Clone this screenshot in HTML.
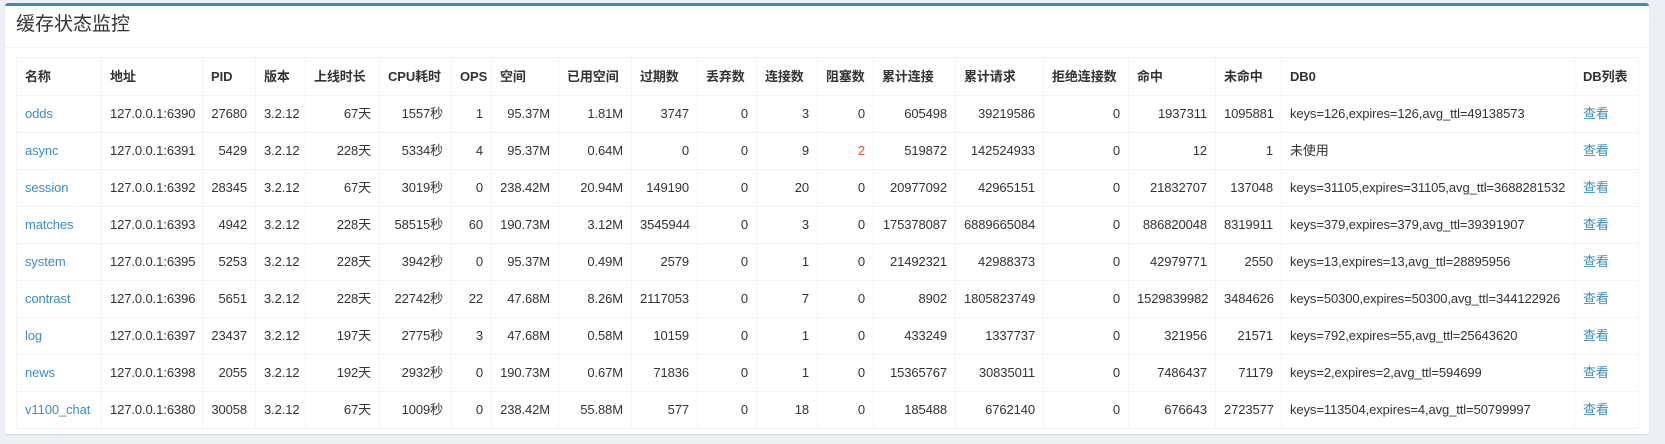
<!DOCTYPE html>
<html><head><meta charset="utf-8"><style>
body{margin:0;background:#ecf0f5;width:1665px;height:444px;overflow:hidden;font-family:"Liberation Sans","Noto Sans CJK SC",sans-serif;font-size:13px;color:#333}
.box{position:absolute;left:5px;top:3px;width:1644px;height:428px;background:#fff;border-top:3px solid #3c8dbc;border-radius:3px;box-shadow:0 1px 1px rgba(0,0,0,.1)}
.hd{height:41px;border-bottom:1px solid #f4f4f4;padding:0 11px;font-size:19px;line-height:38px}
table{position:absolute;left:11px;top:51px;border-collapse:collapse;table-layout:fixed;width:1622px}
td,th{border:1px solid #f4f4f4;padding:0 8px;height:36px;line-height:18px;vertical-align:middle;white-space:nowrap;overflow:hidden;text-align:right;letter-spacing:-0.1px}
th{text-align:left;font-weight:bold;height:37px}
td.l{text-align:left}
a{color:#3c8dbc;text-decoration:none}
.r{color:#dd4b39}
</style></head><body>
<div class="box"><div class="hd">缓存状态监控</div>
<table>
<colgroup><col style="width:85px"><col style="width:101px"><col style="width:53px"><col style="width:50px"><col style="width:74px"><col style="width:72px"><col style="width:40px"><col style="width:67px"><col style="width:73px"><col style="width:66px"><col style="width:59px"><col style="width:61px"><col style="width:56px"><col style="width:82px"><col style="width:88px"><col style="width:85px"><col style="width:87px"><col style="width:66px"><col style="width:293px"><col style="width:64px"></colgroup>
<tr><th>名称</th><th>地址</th><th>PID</th><th>版本</th><th>上线时长</th><th>CPU耗时</th><th>OPS</th><th>空间</th><th>已用空间</th><th>过期数</th><th>丢弃数</th><th>连接数</th><th>阻塞数</th><th>累计连接</th><th>累计请求</th><th>拒绝连接数</th><th>命中</th><th>未命中</th><th>DB0</th><th>DB列表</th></tr>
<tr><td class="l"><a>odds</a></td><td class="l">127.0.0.1:6390</td><td>27680</td><td class="l">3.2.12</td><td>67天</td><td>1557秒</td><td>1</td><td>95.37M</td><td>1.81M</td><td>3747</td><td>0</td><td>3</td><td>0</td><td>605498</td><td>39219586</td><td>0</td><td>1937311</td><td>1095881</td><td class="l">keys=126,expires=126,avg_ttl=49138573</td><td class="l"><a>查看</a></td></tr>
<tr><td class="l"><a>async</a></td><td class="l">127.0.0.1:6391</td><td>5429</td><td class="l">3.2.12</td><td>228天</td><td>5334秒</td><td>4</td><td>95.37M</td><td>0.64M</td><td>0</td><td>0</td><td>9</td><td class="r">2</td><td>519872</td><td>142524933</td><td>0</td><td>12</td><td>1</td><td class="l">未使用</td><td class="l"><a>查看</a></td></tr>
<tr><td class="l"><a>session</a></td><td class="l">127.0.0.1:6392</td><td>28345</td><td class="l">3.2.12</td><td>67天</td><td>3019秒</td><td>0</td><td>238.42M</td><td>20.94M</td><td>149190</td><td>0</td><td>20</td><td>0</td><td>20977092</td><td>42965151</td><td>0</td><td>21832707</td><td>137048</td><td class="l">keys=31105,expires=31105,avg_ttl=3688281532</td><td class="l"><a>查看</a></td></tr>
<tr><td class="l"><a>matches</a></td><td class="l">127.0.0.1:6393</td><td>4942</td><td class="l">3.2.12</td><td>228天</td><td>58515秒</td><td>60</td><td>190.73M</td><td>3.12M</td><td>3545944</td><td>0</td><td>3</td><td>0</td><td>175378087</td><td>6889665084</td><td>0</td><td>886820048</td><td>8319911</td><td class="l">keys=379,expires=379,avg_ttl=39391907</td><td class="l"><a>查看</a></td></tr>
<tr><td class="l"><a>system</a></td><td class="l">127.0.0.1:6395</td><td>5253</td><td class="l">3.2.12</td><td>228天</td><td>3942秒</td><td>0</td><td>95.37M</td><td>0.49M</td><td>2579</td><td>0</td><td>1</td><td>0</td><td>21492321</td><td>42988373</td><td>0</td><td>42979771</td><td>2550</td><td class="l">keys=13,expires=13,avg_ttl=28895956</td><td class="l"><a>查看</a></td></tr>
<tr><td class="l"><a>contrast</a></td><td class="l">127.0.0.1:6396</td><td>5651</td><td class="l">3.2.12</td><td>228天</td><td>22742秒</td><td>22</td><td>47.68M</td><td>8.26M</td><td>2117053</td><td>0</td><td>7</td><td>0</td><td>8902</td><td>1805823749</td><td>0</td><td>1529839982</td><td>3484626</td><td class="l">keys=50300,expires=50300,avg_ttl=344122926</td><td class="l"><a>查看</a></td></tr>
<tr><td class="l"><a>log</a></td><td class="l">127.0.0.1:6397</td><td>23437</td><td class="l">3.2.12</td><td>197天</td><td>2775秒</td><td>3</td><td>47.68M</td><td>0.58M</td><td>10159</td><td>0</td><td>1</td><td>0</td><td>433249</td><td>1337737</td><td>0</td><td>321956</td><td>21571</td><td class="l">keys=792,expires=55,avg_ttl=25643620</td><td class="l"><a>查看</a></td></tr>
<tr><td class="l"><a>news</a></td><td class="l">127.0.0.1:6398</td><td>2055</td><td class="l">3.2.12</td><td>192天</td><td>2932秒</td><td>0</td><td>190.73M</td><td>0.67M</td><td>71836</td><td>0</td><td>1</td><td>0</td><td>15365767</td><td>30835011</td><td>0</td><td>7486437</td><td>71179</td><td class="l">keys=2,expires=2,avg_ttl=594699</td><td class="l"><a>查看</a></td></tr>
<tr><td class="l"><a>v1100_chat</a></td><td class="l">127.0.0.1:6380</td><td>30058</td><td class="l">3.2.12</td><td>67天</td><td>1009秒</td><td>0</td><td>238.42M</td><td>55.88M</td><td>577</td><td>0</td><td>18</td><td>0</td><td>185488</td><td>6762140</td><td>0</td><td>676643</td><td>2723577</td><td class="l">keys=113504,expires=4,avg_ttl=50799997</td><td class="l"><a>查看</a></td></tr>
</table></div>
</body></html>
